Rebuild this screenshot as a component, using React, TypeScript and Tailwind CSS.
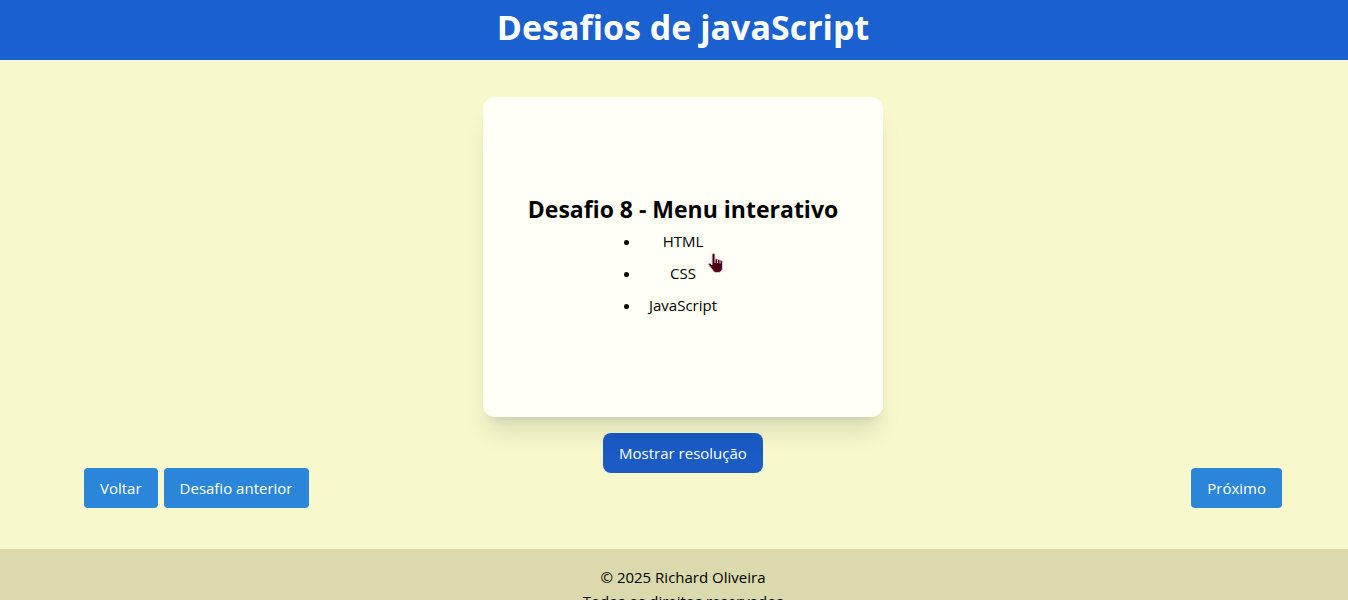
const topics = ['HTML', 'CSS', 'JavaScript'];

function HandPointer() {
  return (
    <svg
      aria-hidden="true"
      viewBox="0 0 18 22"
      className="pointer-events-none absolute top-[155px] left-[224px] h-[22px] w-[18px]"
    >
      <path
        d="M6.5 1.5c1 0 1.500.7 1.500 1.600V7c1-.6 2.200-.2 2.500.6 1-.5 2.100 0 2.400.8 1.300-.5 2.600.2 2.600 1.600v5.500c0 3-1.700 5-4.500 5H9.300c-1.600 0-2.600-.7-3.500-2.200L1.700 13c-.6-1 .5-2.200 1.700-1.500L5 13V3.100c0-.9.500-1.600 1.500-1.600Z"
        fill="#4a0018"
        stroke="#e6c9d6"
        strokeWidth="1"
        strokeLinejoin="round"
      />
      <path d="M8 7v4M10.500 8v3M13 9v2.500" stroke="#e6c9d6" strokeWidth="1" />
    </svg>
  );
}

function NavButton({ children }: { children: string }) {
  return (
    <button type="button" className="h-10 rounded bg-[#2b85d8] px-4 text-white">
      {children}
    </button>
  );
}

export default function App() {
  return (
    <div className="min-h-screen bg-[#f8f8cd] font-['Open_Sans','Noto_Sans',sans-serif] text-[15px] leading-6 text-black">
      <header className="flex h-[60px] items-start justify-center bg-[#1a60cf] pt-1 pl-[18px]">
        <h1 className="text-[34px] leading-[46px] font-bold text-white">Desafios de javaScript</h1>
      </header>

      <main className="flex flex-col pt-[37px] pb-[41px] pl-[18px]">
        <section className="relative flex h-80 w-[400px] flex-col items-center justify-center self-center rounded-xl bg-[#fffff5] shadow-xl">
          <h2 className="text-[23px] leading-8 font-bold">Desafio 8 - Menu interativo</h2>
          <ul className="list-disc text-center">
            {topics.map((topic) => (
              <li key={topic} className="px-2 py-1">
                {topic}
              </li>
            ))}
          </ul>
          <HandPointer />
        </section>
        <button
          type="button"
          className="mt-4 h-10 self-center rounded-lg bg-[#1a5bc4] px-4 text-white"
        >
          Mostrar resolução
        </button>
        <nav className="-mt-[5px] flex justify-between px-[66px]">
          <div className="flex gap-1.5">
            <NavButton>Voltar</NavButton>
            <NavButton>Desafio anterior</NavButton>
          </div>
          <NavButton>Próximo</NavButton>
        </nav>
      </main>

      <footer className="bg-[#dadaad] py-4 pl-[18px] text-center">
        <p>© 2025 Richard Oliveira</p>
        <p>Todos os direitos reservados</p>
      </footer>
    </div>
  );
}
